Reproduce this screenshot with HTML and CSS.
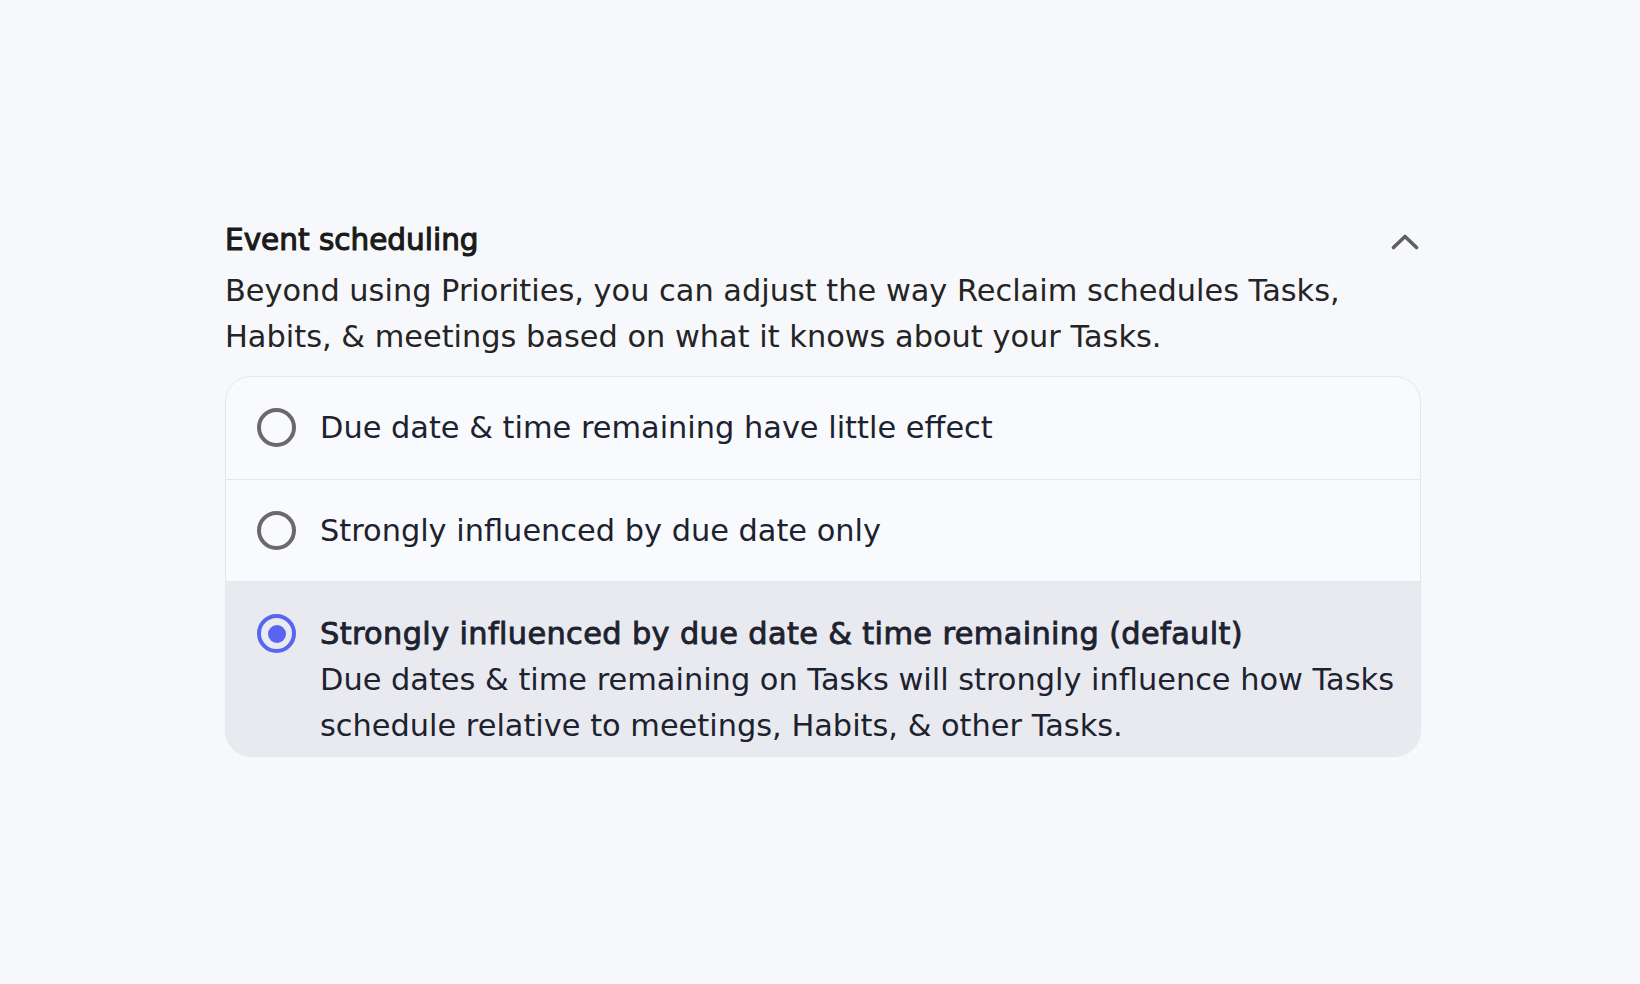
FILE: index.html
```html
<!DOCTYPE html>
<html lang="en">
<head>
<meta charset="utf-8">
<title>Event scheduling</title>
<link rel="stylesheet" href="styles.css">
</head>
<body>
<main class="page">
  <section class="section">
    <header class="section-head">
      <h2 class="title">Event scheduling</h2>
      <svg class="chevron" width="28" height="16" viewBox="0 0 28 16" aria-hidden="true">
        <path d="M2.5 13.5 L14 2.5 L25.5 13.5" fill="none" stroke="#5f5f5f" stroke-width="3.6" stroke-linecap="round" stroke-linejoin="round"/>
      </svg>
    </header>
    <p class="desc">Beyond using Priorities, you can adjust the way Reclaim schedules Tasks, Habits, &amp; meetings based on what it knows about your Tasks.</p>
    <div class="options">
      <div class="option">
        <span class="radio"></span>
        <div class="option-text">
          <div class="option-label">Due date &amp; time remaining have little effect</div>
        </div>
      </div>
      <div class="option">
        <span class="radio"></span>
        <div class="option-text">
          <div class="option-label">Strongly influenced by due date only</div>
        </div>
      </div>
      <div class="option option-selected">
        <span class="radio radio-on"><span class="dot"></span></span>
        <div class="option-text">
          <div class="option-label option-label-strong">Strongly influenced by due date &amp; time remaining (default)</div>
          <div class="option-desc">Due dates &amp; time remaining on Tasks will strongly influence how Tasks schedule relative to meetings, Habits, &amp; other Tasks.</div>
        </div>
      </div>
    </div>
  </section>
</main>
</body>
</html>
```

FILE: styles.css
```css
html, body {
  margin: 0;
  padding: 0;
}
body {
  background: #f7f8fb;
  font-family: "DejaVu Sans", "Noto Sans", sans-serif;
  color: #1d2230;
}
.page {
  padding: 218px 0 0 225px;
}
.section {
  width: 1196px;
}
.section-head {
  display: flex;
  align-items: center;
  justify-content: space-between;
}
.title {
  margin: 0;
  font-size: 29.5px;
  line-height: 44px;
  font-weight: normal;
  color: #1a1a1a;
  -webkit-text-stroke: 1.1px #1a1a1a;
}
.chevron {
  display: block;
  margin: 4px 2px 0 0;
}
.desc {
  margin: 6px 0 0 0;
  font-size: 30.4px;
  line-height: 45.6px;
  color: #242424;
}
.options {
  margin-top: 17px;
  border: 1px solid #e6e7eb;
  border-radius: 26px;
  overflow: hidden;
  background: #f9fafd;
}
.option {
  display: flex;
  align-items: flex-start;
  padding: 28px 10px 28px 31px;
  gap: 24px;
}
.option + .option {
  border-top: 1px solid #e6e7eb;
}
.option-selected {
  background: #e9eaef;
  padding-top: 29px;
  padding-bottom: 8px;
}
.radio {
  flex: none;
  box-sizing: border-box;
  width: 39px;
  height: 39px;
  margin-top: 3px;
  border: 4px solid #6a6a6a;
  border-radius: 50%;
  display: flex;
  align-items: center;
  justify-content: center;
}
.radio-on {
  border-color: #5865f2;
}
.dot {
  width: 18px;
  height: 18px;
  border-radius: 50%;
  background: #5865f2;
}
.option-text {
  flex: 1;
  min-width: 0;
}
.option-label {
  font-size: 30.4px;
  line-height: 45.6px;
  color: #1d2230;
}
.option-label-strong {
  letter-spacing: 0.36px;
  -webkit-text-stroke: 0.9px #1d2230;
}
.option-desc {
  font-size: 30.4px;
  line-height: 45.6px;
  color: #1d2230;
}
```
